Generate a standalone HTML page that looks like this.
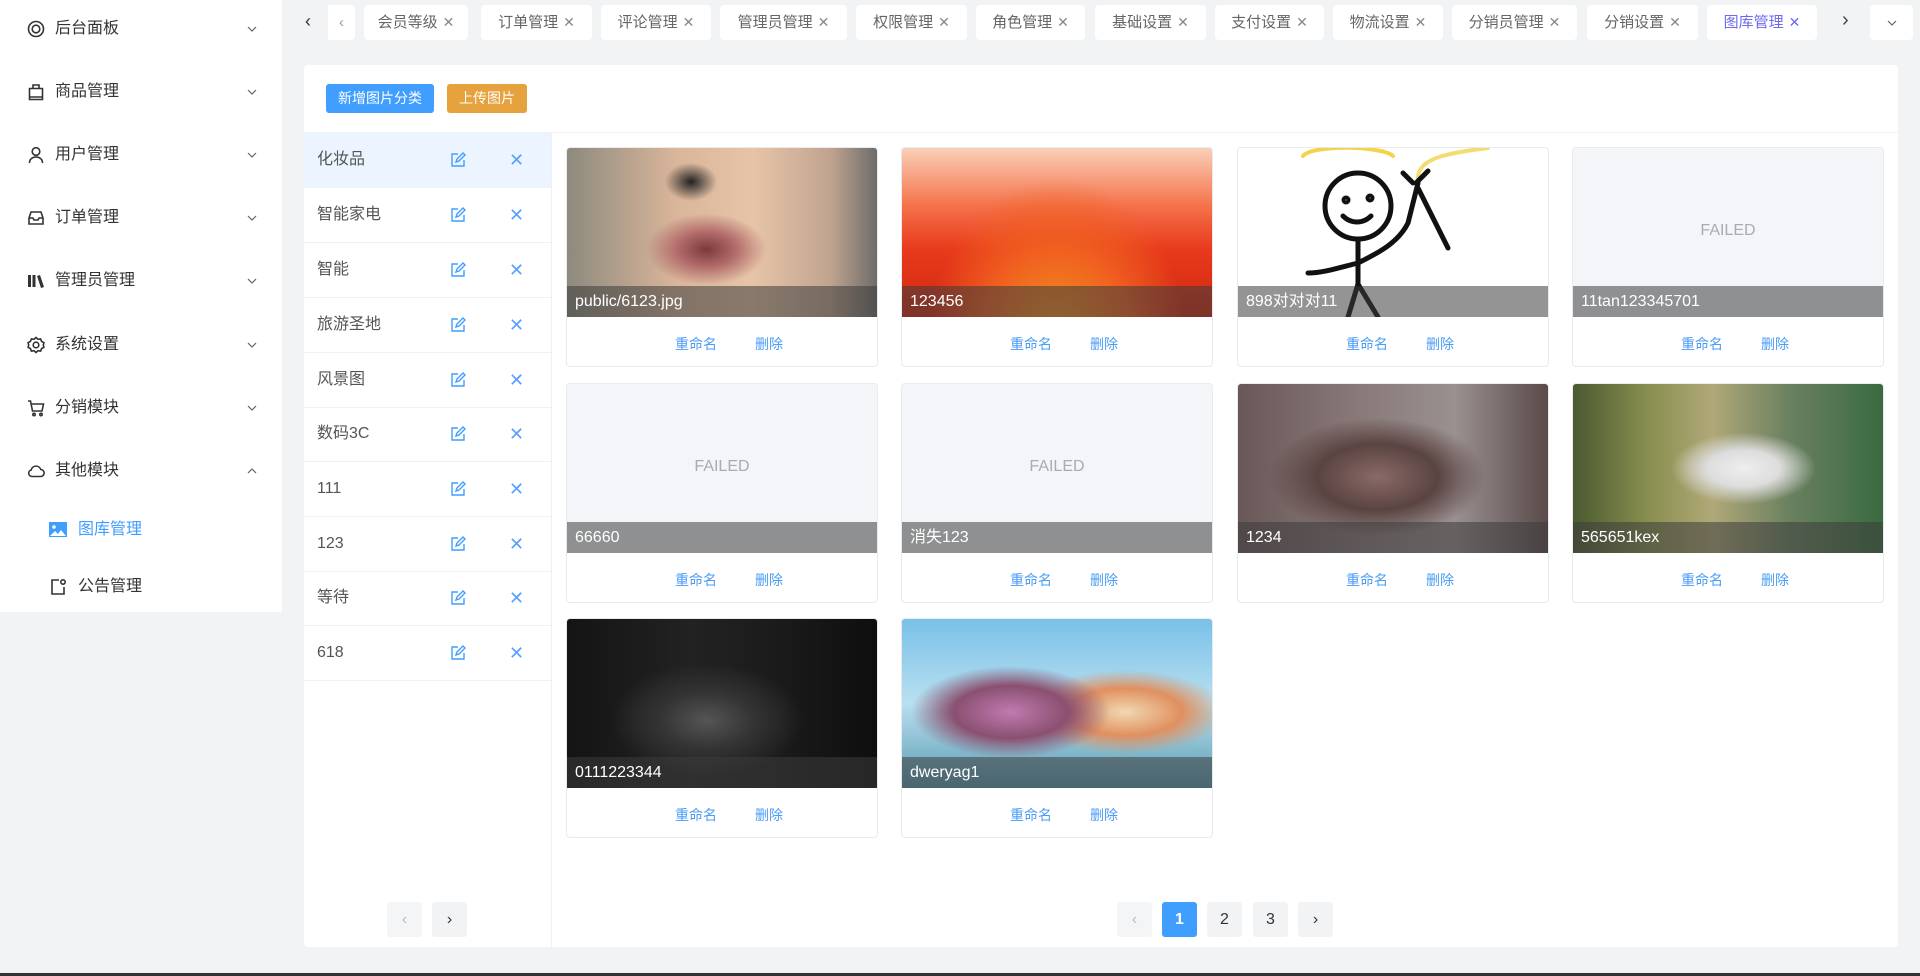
<!DOCTYPE html>
<html><head><meta charset="utf-8"><style>
*{box-sizing:border-box;margin:0;padding:0}
body{width:1920px;height:976px;overflow:hidden;background:#f2f3f5;font-family:"Liberation Sans","Noto Sans CJK SC",sans-serif;position:relative;color:#333}
.abs{position:absolute}
#side{left:0;top:0;width:282px;height:612px;background:#fff}
.mi{position:absolute;left:0;width:282px;height:40px;display:flex;align-items:center;font-size:16px;color:#333}
.mi svg.ic{position:absolute;left:27px;width:18px;height:18px}
.mi .t{position:absolute;left:55px;top:0;line-height:40px;height:40px}
.mi .ch{position:absolute;left:246px;width:12px;height:12px}
.tab{position:absolute;top:5px;height:35px;background:#fff;border-radius:4px;font-size:15px;color:#666;display:flex;align-items:center;justify-content:center;white-space:nowrap;line-height:35px}
.tab .x{margin-left:5px;font-size:14px;color:#888}
#card{left:304px;top:65px;width:1594px;height:882px;background:#fff;border-radius:4px}
.btn{position:absolute;top:84px;height:29px;border-radius:3px;color:#fff;font-size:14px;display:flex;align-items:center;justify-content:center;line-height:29px}
.cat{position:absolute;left:304px;width:247px;height:55px;border-bottom:1px solid #eef0f3;font-size:16px;color:#555}
.cat .n{position:absolute;left:13px;top:0;height:54px;line-height:54px}
.cat .e{position:absolute;left:146px;top:19px}
.cat .c{position:absolute;left:205px;top:0;line-height:54px;color:#5aa0ff;font-size:18px}
.img{position:absolute;width:312px;height:220px;border:1px solid #e8eaee;border-radius:4px;background:#fff;overflow:hidden}
.img .p{position:absolute;left:0;top:0;width:310px;height:169px}
.img .cap{position:absolute;left:0;top:138px;width:310px;height:31px;background:rgba(60,60,60,.55);color:#fff;font-size:16px;padding:0 8px;line-height:31px}
.img .fail{position:absolute;left:0;top:0;width:310px;height:169px;background:#f4f5f8;color:#a8abb2;font-size:16px;text-align:center;padding-top:74px}
.img .a{position:absolute;top:186px;font-size:14px;color:#4a9cf5;line-height:20px}
.pg{position:absolute;top:902px;width:35px;height:35px;border-radius:3px;background:#f2f3f5;display:flex;align-items:center;justify-content:center;font-size:16px;color:#333}
</style></head><body>
<div id="side" class="abs"></div>
<div class="mi" style="top:9px"><svg class="ic" viewBox="0 0 18 18" fill="none" stroke="#333" stroke-width="1.6"><circle cx="9" cy="9" r="7.5"/><circle cx="9" cy="9" r="3.8"/></svg><span class="t">后台面板</span><svg class="ch" viewBox="0 0 12 12" fill="none" stroke="#666" stroke-width="1.2"><path d="M2 4l4 4 4-4"/></svg></div>
<div class="mi" style="top:72px"><svg class="ic" viewBox="0 0 18 18" fill="none" stroke="#333" stroke-width="1.6"><path d="M2.5 5.5h13v11h-13z M6 5.5V2h6v3.5 M2.5 14h13"/></svg><span class="t">商品管理</span><svg class="ch" viewBox="0 0 12 12" fill="none" stroke="#666" stroke-width="1.2"><path d="M2 4l4 4 4-4"/></svg></div>
<div class="mi" style="top:135px"><svg class="ic" viewBox="0 0 18 18" fill="none" stroke="#333" stroke-width="1.6"><circle cx="9" cy="5.5" r="3.8"/><path d="M2.5 17c0-4 3-6 6.5-6s6.5 2 6.5 6"/></svg><span class="t">用户管理</span><svg class="ch" viewBox="0 0 12 12" fill="none" stroke="#666" stroke-width="1.2"><path d="M2 4l4 4 4-4"/></svg></div>
<div class="mi" style="top:198px"><svg class="ic" viewBox="0 0 18 18" fill="none" stroke="#333" stroke-width="1.6"><path d="M2 9l2-6h10l2 6v6H2z M2 9h4l1 2h4l1-2h4"/></svg><span class="t">订单管理</span><svg class="ch" viewBox="0 0 12 12" fill="none" stroke="#666" stroke-width="1.2"><path d="M2 4l4 4 4-4"/></svg></div>
<div class="mi" style="top:261px"><svg class="ic" viewBox="0 0 18 18" fill="#333"><rect x="1" y="3" width="3" height="12"/><rect x="5.5" y="3" width="3" height="12"/><path d="M10 4l3-1 4 12-3 1z"/></svg><span class="t">管理员管理</span><svg class="ch" viewBox="0 0 12 12" fill="none" stroke="#666" stroke-width="1.2"><path d="M2 4l4 4 4-4"/></svg></div>
<div class="mi" style="top:325px"><svg class="ic" viewBox="0 0 18 18" fill="none" stroke="#333" stroke-width="1.6"><circle cx="9" cy="9" r="2.8"/><path d="M9 1.5l2 1.8 2.6-.4 1 2.5 2.3 1.3-.6 2.3.6 2.3-2.3 1.3-1 2.5-2.6-.4L9 16.5l-2-1.8-2.6.4-1-2.5-2.3-1.3.6-2.3-.6-2.3 2.3-1.3 1-2.5 2.6.4z"/></svg><span class="t">系统设置</span><svg class="ch" viewBox="0 0 12 12" fill="none" stroke="#666" stroke-width="1.2"><path d="M2 4l4 4 4-4"/></svg></div>
<div class="mi" style="top:388px"><svg class="ic" viewBox="0 0 18 18" fill="none" stroke="#333" stroke-width="1.6"><path d="M1 2h2.5l2 10h9.5l1.5-7H4.5"/><circle cx="7" cy="15.5" r="1.2"/><circle cx="14" cy="15.5" r="1.2"/></svg><span class="t">分销模块</span><svg class="ch" viewBox="0 0 12 12" fill="none" stroke="#666" stroke-width="1.2"><path d="M2 4l4 4 4-4"/></svg></div>
<div class="mi" style="top:451px"><svg class="ic" viewBox="0 0 18 18" fill="none" stroke="#333" stroke-width="1.6"><path d="M5 14.5h8.5a3.5 3.5 0 0 0 .3-7A5 5 0 0 0 4.2 8 3.3 3.3 0 0 0 5 14.5z"/></svg><span class="t">其他模块</span><svg class="ch" viewBox="0 0 12 12" fill="none" stroke="#666" stroke-width="1.2"><path d="M2 8l4-4 4 4"/></svg></div>
<div class="mi" style="top:510px;color:#409eff"><svg class="ic" style="left:49px" viewBox="0 0 18 18"><rect x="0" y="1" width="18" height="15" fill="#409eff"/><circle cx="5" cy="6" r="1.8" fill="#fff"/><path d="M1 15l5-5 3 3 3-4 5 6z" fill="#fff"/></svg><span class="t" style="left:78px">图库管理</span></div>
<div class="mi" style="top:567px"><svg class="ic" style="left:49px" viewBox="0 0 18 18" fill="none" stroke="#333" stroke-width="1.6"><path d="M10 2H3v14h12V9"/><circle cx="14" cy="4" r="2.2"/></svg><span class="t" style="left:78px">公告管理</span></div>

<div class="abs" style="left:305px;top:11px;font-size:18px;color:#333">‹</div>
<div class="tab" style="left:328px;width:27px;border-radius:0 4px 4px 0;color:#999">‹</div>
<div class="tab" style="left:364px;width:104px">会员等级<span class="x">✕</span></div>
<div class="tab" style="left:481px;width:111px">订单管理<span class="x">✕</span></div>
<div class="tab" style="left:601px;width:110px">评论管理<span class="x">✕</span></div>
<div class="tab" style="left:720px;width:127px">管理员管理<span class="x">✕</span></div>
<div class="tab" style="left:856px;width:111px">权限管理<span class="x">✕</span></div>
<div class="tab" style="left:976px;width:109px">角色管理<span class="x">✕</span></div>
<div class="tab" style="left:1095px;width:111px">基础设置<span class="x">✕</span></div>
<div class="tab" style="left:1215px;width:109px">支付设置<span class="x">✕</span></div>
<div class="tab" style="left:1333px;width:110px">物流设置<span class="x">✕</span></div>
<div class="tab" style="left:1452px;width:125px">分销员管理<span class="x">✕</span></div>
<div class="tab" style="left:1587px;width:111px">分销设置<span class="x">✕</span></div>
<div class="tab" style="left:1707px;width:110px;color:#6b6bf0">图库管理<span class="x" style="color:#6b6bf0">✕</span></div>
<div class="abs" style="left:1842px;top:9px;font-size:20px;color:#444">›</div>
<div class="tab" style="left:1870px;width:43px"><svg width="12" height="12" viewBox="0 0 12 12" fill="none" stroke="#666" stroke-width="1.2"><path d="M2 4l4 4 4-4"/></svg></div>

<div id="card" class="abs"></div>
<div class="btn" style="left:326px;width:108px;background:#409eff">新增图片分类</div>
<div class="btn" style="left:447px;width:80px;background:#e6a23c">上传图片</div>
<div class="abs" style="left:304px;top:132px;width:1594px;height:1px;background:#eef0f3"></div>
<div class="abs" style="left:551px;top:133px;width:1px;height:814px;background:#eef0f3"></div>

<div class="cat" style="top:133px;background:#ecf5ff"><span class="n">化妆品</span><svg class="e" width="16" height="16" viewBox="0 0 16 16" fill="none" stroke="#409eff" stroke-width="1.4"><path d="M8 2H2v12h12V8"/><path d="M6 10l1-3 6-6 2 2-6 6z"/></svg><span class="c">✕</span></div>
<div class="cat" style="top:188px"><span class="n">智能家电</span><svg class="e" width="16" height="16" viewBox="0 0 16 16" fill="none" stroke="#409eff" stroke-width="1.4"><path d="M8 2H2v12h12V8"/><path d="M6 10l1-3 6-6 2 2-6 6z"/></svg><span class="c">✕</span></div>
<div class="cat" style="top:243px"><span class="n">智能</span><svg class="e" width="16" height="16" viewBox="0 0 16 16" fill="none" stroke="#409eff" stroke-width="1.4"><path d="M8 2H2v12h12V8"/><path d="M6 10l1-3 6-6 2 2-6 6z"/></svg><span class="c">✕</span></div>
<div class="cat" style="top:298px"><span class="n">旅游圣地</span><svg class="e" width="16" height="16" viewBox="0 0 16 16" fill="none" stroke="#409eff" stroke-width="1.4"><path d="M8 2H2v12h12V8"/><path d="M6 10l1-3 6-6 2 2-6 6z"/></svg><span class="c">✕</span></div>
<div class="cat" style="top:353px"><span class="n">风景图</span><svg class="e" width="16" height="16" viewBox="0 0 16 16" fill="none" stroke="#409eff" stroke-width="1.4"><path d="M8 2H2v12h12V8"/><path d="M6 10l1-3 6-6 2 2-6 6z"/></svg><span class="c">✕</span></div>
<div class="cat" style="top:407px"><span class="n">数码3C</span><svg class="e" width="16" height="16" viewBox="0 0 16 16" fill="none" stroke="#409eff" stroke-width="1.4"><path d="M8 2H2v12h12V8"/><path d="M6 10l1-3 6-6 2 2-6 6z"/></svg><span class="c">✕</span></div>
<div class="cat" style="top:462px"><span class="n">111</span><svg class="e" width="16" height="16" viewBox="0 0 16 16" fill="none" stroke="#409eff" stroke-width="1.4"><path d="M8 2H2v12h12V8"/><path d="M6 10l1-3 6-6 2 2-6 6z"/></svg><span class="c">✕</span></div>
<div class="cat" style="top:517px"><span class="n">123</span><svg class="e" width="16" height="16" viewBox="0 0 16 16" fill="none" stroke="#409eff" stroke-width="1.4"><path d="M8 2H2v12h12V8"/><path d="M6 10l1-3 6-6 2 2-6 6z"/></svg><span class="c">✕</span></div>
<div class="cat" style="top:571px"><span class="n">等待</span><svg class="e" width="16" height="16" viewBox="0 0 16 16" fill="none" stroke="#409eff" stroke-width="1.4"><path d="M8 2H2v12h12V8"/><path d="M6 10l1-3 6-6 2 2-6 6z"/></svg><span class="c">✕</span></div>
<div class="cat" style="top:626px"><span class="n">618</span><svg class="e" width="16" height="16" viewBox="0 0 16 16" fill="none" stroke="#409eff" stroke-width="1.4"><path d="M8 2H2v12h12V8"/><path d="M6 10l1-3 6-6 2 2-6 6z"/></svg><span class="c">✕</span></div>

<div class="img" style="left:566px;top:147px"><div class="p" style="background:radial-gradient(ellipse at 45% 60%,#7a3a3a 0,#b26a6a 12%,transparent 25%),radial-gradient(ellipse at 40% 20%,#222 0,transparent 10%),linear-gradient(90deg,#8d8a7e,#d9b59a 35%,#e7c4a8 60%,#c0a48f 85%,#6d6c6a)"></div><div class="cap">public/6123.jpg</div><span class="a" style="left:108px">重命名</span><span class="a" style="left:188px">删除</span></div>
<div class="img" style="left:901px;top:147px"><div class="p" style="background:radial-gradient(ellipse at 50% 120%,#f0a020 0,#f06020 35%,transparent 60%),linear-gradient(180deg,#f9d0b8 0,#f47048 35%,#e83a1c 60%,#d02810)"></div><div class="cap">123456</div><span class="a" style="left:108px">重命名</span><span class="a" style="left:188px">删除</span></div>
<div class="img" style="left:1237px;top:147px"><div class="p" style="background:#fff"><svg width="310" height="169" viewBox="0 0 310 169" fill="none" stroke="#111" stroke-width="5" stroke-linecap="round"><path d="M65 8c10-12 80-10 90 0" stroke="#f2d34a" stroke-width="4"/><path d="M180 30c0-20 30-25 70-30" stroke="#f4dd70" stroke-width="4"/><circle cx="120" cy="58" r="33"/><circle cx="108" cy="52" r="2"/><circle cx="132" cy="50" r="2"/><path d="M105 68c8 8 20 8 28 0"/><path d="M120 91v45 M120 115c-20 5-35 10-50 10 M120 115c20-10 40-20 50-40 M120 136l-10 33 M120 136l20 33 M170 75l10-40 M175 35l-10-10 M178 35l12-12 M180 40l30 60"/></svg></div><div class="cap">898对对对11</div><span class="a" style="left:108px">重命名</span><span class="a" style="left:188px">删除</span></div>
<div class="img" style="left:1572px;top:147px"><div class="fail">FAILED</div><div class="cap">11tan123345701</div><span class="a" style="left:108px">重命名</span><span class="a" style="left:188px">删除</span></div>
<div class="img" style="left:566px;top:383px"><div class="fail">FAILED</div><div class="cap">66660</div><span class="a" style="left:108px">重命名</span><span class="a" style="left:188px">删除</span></div>
<div class="img" style="left:901px;top:383px"><div class="fail">FAILED</div><div class="cap">消失123</div><span class="a" style="left:108px">重命名</span><span class="a" style="left:188px">删除</span></div>
<div class="img" style="left:1237px;top:383px"><div class="p" style="background:radial-gradient(ellipse at 45% 55%,#8a6a66 0,#5a4442 25%,transparent 45%),linear-gradient(90deg,#6a5858,#8a7a7a 40%,#9a9090 70%,#5a4a4a)"></div><div class="cap">1234</div><span class="a" style="left:108px">重命名</span><span class="a" style="left:188px">删除</span></div>
<div class="img" style="left:1572px;top:383px"><div class="p" style="background:radial-gradient(ellipse at 55% 50%,#eee 0,#ddd 15%,transparent 30%),linear-gradient(90deg,#4a5a30,#8a9050 25%,#b0a878 45%,#6a8060 70%,#3a6a40)"></div><div class="cap">565651kex</div><span class="a" style="left:108px">重命名</span><span class="a" style="left:188px">删除</span></div>
<div class="img" style="left:566px;top:618px"><div class="p" style="background:radial-gradient(ellipse at 45% 60%,#555 0,#333 20%,transparent 40%),linear-gradient(90deg,#141414,#222 40%,#1a1a1a 70%,#0e0e0e)"></div><div class="cap">0111223344</div><span class="a" style="left:108px">重命名</span><span class="a" style="left:188px">删除</span></div>
<div class="img" style="left:901px;top:618px"><div class="p" style="background:radial-gradient(ellipse at 35% 55%,#c07ab0 0,#8a5070 20%,transparent 35%),radial-gradient(ellipse at 72% 55%,#f0d8b0 0,#e09060 18%,transparent 32%),linear-gradient(180deg,#7ac0e8,#b8e0f0 50%,#5a9ab0)"></div><div class="cap">dweryag1</div><span class="a" style="left:108px">重命名</span><span class="a" style="left:188px">删除</span></div>

<div class="pg" style="left:387px;color:#bbb;background:#f4f5f7">‹</div>
<div class="pg" style="left:432px">›</div>
<div class="pg" style="left:1117px;color:#bbb;background:#f4f5f7">‹</div>
<div class="pg" style="left:1162px;background:#409eff;color:#fff;font-weight:bold">1</div>
<div class="pg" style="left:1207px">2</div>
<div class="pg" style="left:1253px">3</div>
<div class="pg" style="left:1298px">›</div>
<div class="abs" style="left:0;top:973px;width:1920px;height:3px;background:#333"></div>
</body></html>
